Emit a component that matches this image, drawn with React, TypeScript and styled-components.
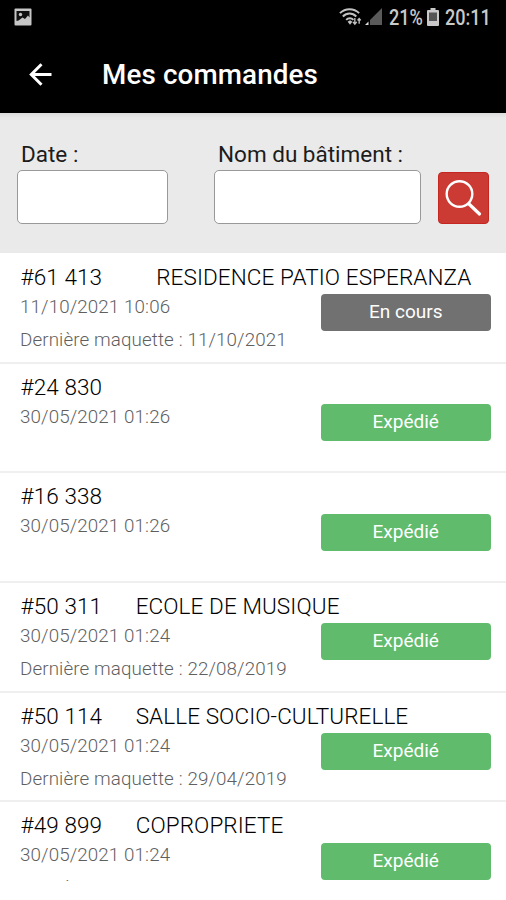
import React from "react";
import styled, { createGlobalStyle } from "styled-components";

const GlobalStyle = createGlobalStyle`
  * { box-sizing: border-box; }
  body { margin: 0; background: #fff; font-family: Roboto, "Liberation Sans", sans-serif; }
`;

const Screen = styled.main`
  display: flex;
  flex-direction: column;
  width: 506px;
  height: 900px;
  overflow: hidden;
  background: #fff;
`;

const StatusBar = styled.div`
  display: flex;
  align-items: center;
  flex: none;
  height: 34px;
  padding: 0 15px 0 14px;
  background: #000;
  color: #c9c9c9;
`;

const StatusItems = styled.div`
  display: flex;
  align-items: center;
  margin-left: auto;
`;

const StatusText = styled.span<{ $width: number }>`
  width: ${(p) => p.$width}px;
  font-size: 21.8px;
  font-weight: 500;
  line-height: 34px;
  white-space: nowrap;
  transform: translateY(1px) scaleX(0.83);
  transform-origin: left;
`;

const TitleBar = styled.header`
  display: flex;
  align-items: center;
  flex: none;
  height: 79px;
  padding: 2px 26px 0;
  background: #000;
  color: #fff;
`;

const BackButton = styled.button`
  display: flex;
  width: 76px;
  padding: 0;
  border: 0;
  background: none;
`;

const Title = styled.h1`
  margin: 0;
  font-size: 27.8px;
  font-weight: 500;
  line-height: 77px;
  letter-spacing: 0.12px;
`;

const Filters = styled.form`
  display: flex;
  align-items: flex-start;
  flex: none;
  height: 140px;
  padding: 27px 17px 0;
  background: linear-gradient(#dcdcdc, #eaeaea 5px);
`;

const Field = styled.label<{ $width: number; $gap: number }>`
  display: flex;
  flex-direction: column;
  width: ${(p) => p.$width}px;
  margin-right: ${(p) => p.$gap}px;
`;

const FieldName = styled.span`
  height: 30px;
  padding-left: 4px;
  color: #1c1c1c;
  font-size: 22.5px;
  line-height: 29px;
  white-space: nowrap;
`;

const Input = styled.input`
  width: 100%;
  height: 54px;
  border: 1.500px solid #999;
  border-radius: 5px;
  background: #fff;
`;

const SearchButton = styled.button`
  display: flex;
  width: 51px;
  height: 52px;
  margin-top: 32px;
  padding: 0;
  border: 1px solid #c4271f;
  border-radius: 4px;
  background: #cb3a33;
`;

const Orders = styled.ul`
  flex: none;
  height: 628px;
  margin: 0;
  padding: 1px 0 0;
  overflow: hidden;
  list-style: none;
`;

const Order = styled.li`
  display: grid;
  grid-template-columns: 300.500px 170.500px;
  grid-template-rows: 28px 33px 33px;
  height: 109.67px;
  padding: 9px 15px 0 20px;
  border-bottom: 2px solid #efefef;
`;

const Heading = styled.div<{ $gap: number }>`
  display: flex;
  grid-column: 1 / 3;
  gap: ${(p) => p.$gap}px;
  padding-left: 0.5px;
  color: #000;
  font-size: 22.5px;
  font-weight: 350;
  line-height: 28px;
  letter-spacing: 0.1px;
  white-space: nowrap;
`;

const Detail = styled.div`
  grid-column: 1;
  color: #5f5f5f;
  font-size: 18.8px;
  font-weight: 330;
  line-height: 33px;
  letter-spacing: 0.11px;
  white-space: nowrap;
`;

const Status = styled.div<{ $sent: boolean }>`
  grid-column: 2;
  grid-row: 2 / 4;
  height: 37px;
  margin-top: 3.300px;
  border-radius: 4px;
  background: ${(p) => (p.$sent ? "#60bb6c" : "#717171")};
  color: #fff;
  font-size: 19px;
  line-height: 36.500px;
  text-align: center;
`;

const orders = [
  { id: "#61 413", name: "RESIDENCE PATIO ESPERANZA", gap: 54, date: "11/10/2021 10:06", model: "11/10/2021", sent: false },
  { id: "#24 830", name: "", gap: 33, date: "30/05/2021 01:26", model: "", sent: true },
  { id: "#16 338", name: "", gap: 33, date: "30/05/2021 01:26", model: "", sent: true },
  { id: "#50 311", name: "ECOLE DE MUSIQUE", gap: 33.500, date: "30/05/2021 01:24", model: "22/08/2019", sent: true },
  { id: "#50 114", name: "SALLE SOCIO-CULTURELLE", gap: 33.500, date: "30/05/2021 01:24", model: "29/04/2019", sent: true },
  { id: "#49 899", name: "COPROPRIETE", gap: 33.500, date: "30/05/2021 01:24", model: "22/08/2019", sent: true },
];

const PictureIcon = () => (
  <svg width="18" height="18" viewBox="0 0 18 18">
    <rect x="0.5" y="0.5" width="17" height="17" rx="1" fill="#c6c6c6" />
    <path d="M2.500 3h13v6.500l-1.500-2-3 3.500-2.500-1.500-4 3-2 .5z" fill="#111" />
    <circle cx="6.500" cy="6.500" r="1.700" fill="#c6c6c6" />
  </svg>
);

const WifiIcon = () => (
  <svg width="24" height="20" viewBox="0 0 25 20" fill="none" stroke="#c2c2c2" strokeWidth="2">
    <path d="M1 6C6.500 0.500 15.500 0.500 21 6M4 9.500c4-4.200 10-4.200 14 0M7.500 13c2-2.300 5.500-2.300 7.500 0" />
    <path d="M9 15l2.500-1.500L14 15l-2.500 3z" fill="#c2c2c2" stroke="none" />
    <path d="M16.500 11v6M14.500 15l2 2.500 2-2.500M21 17v-5M19.300 13.500L21 11.500l1.700 2" strokeWidth="1.400" />
  </svg>
);

const SignalIcon = () => (
  <svg width="26" height="18" viewBox="0 0 26 18">
    <path d="M19 0v17H7V12z" fill="#5a5a5a" />
    <path d="M2 17l3.500-3.500V17z" fill="#ddd" />
  </svg>
);

const BatteryIcon = () => (
  <svg width="18" height="18" viewBox="0 0 18 18">
    <path d="M3.500 0h5v2H11q1 0 1 1v14q0 1-1 1H1q-1 0-1-1V3q0-1 1-1h2.500z" fill="#c9c9c9" />
    <path d="M2 4.500h8V13H2z" fill="#555" />
  </svg>
);

const BackIcon = () => (
  <svg width="26" height="24" viewBox="0 0 26 24" fill="none" stroke="#fff" strokeWidth="3">
    <path d="M25.500 11.500H5M15.500 1.300L5.300 11.500 15.500 21.700" />
  </svg>
);

const SearchIcon = () => (
  <svg width="49" height="50" viewBox="0 0 49 50" fill="none" stroke="#fff" strokeLinecap="round">
    <circle cx="20.500" cy="21" r="12.800" strokeWidth="2.400" />
    <path d="M30 31l10.500 10" strokeWidth="3.200" />
  </svg>
);

export default function App() {
  return (
    <>
      <GlobalStyle />
      <Screen>
        <StatusBar>
          <PictureIcon />
          <StatusItems>
            <WifiIcon />
            <SignalIcon />
            <StatusText $width={38}>21%</StatusText>
            <BatteryIcon />
            <StatusText $width={46}>20:11</StatusText>
          </StatusItems>
        </StatusBar>
        <TitleBar>
          <BackButton type="button">
            <BackIcon />
          </BackButton>
          <Title>Mes commandes</Title>
        </TitleBar>
        <Filters>
          <Field $width={151} $gap={46}>
            <FieldName>Date :</FieldName>
            <Input />
          </Field>
          <Field $width={207} $gap={17}>
            <FieldName>Nom du bâtiment :</FieldName>
            <Input />
          </Field>
          <SearchButton type="button">
            <SearchIcon />
          </SearchButton>
        </Filters>
        <Orders>
          {orders.map((o) => (
            <Order key={o.id}>
              <Heading $gap={o.gap}>
                <span>{o.id}</span>
                <span>{o.name}</span>
              </Heading>
              <Detail>{o.date}</Detail>
              {o.model && <Detail>Dernière maquette : {o.model}</Detail>}
              <Status $sent={o.sent}>{o.sent ? "Expédié" : "En cours"}</Status>
            </Order>
          ))}
        </Orders>
      </Screen>
    </>
  );
}
